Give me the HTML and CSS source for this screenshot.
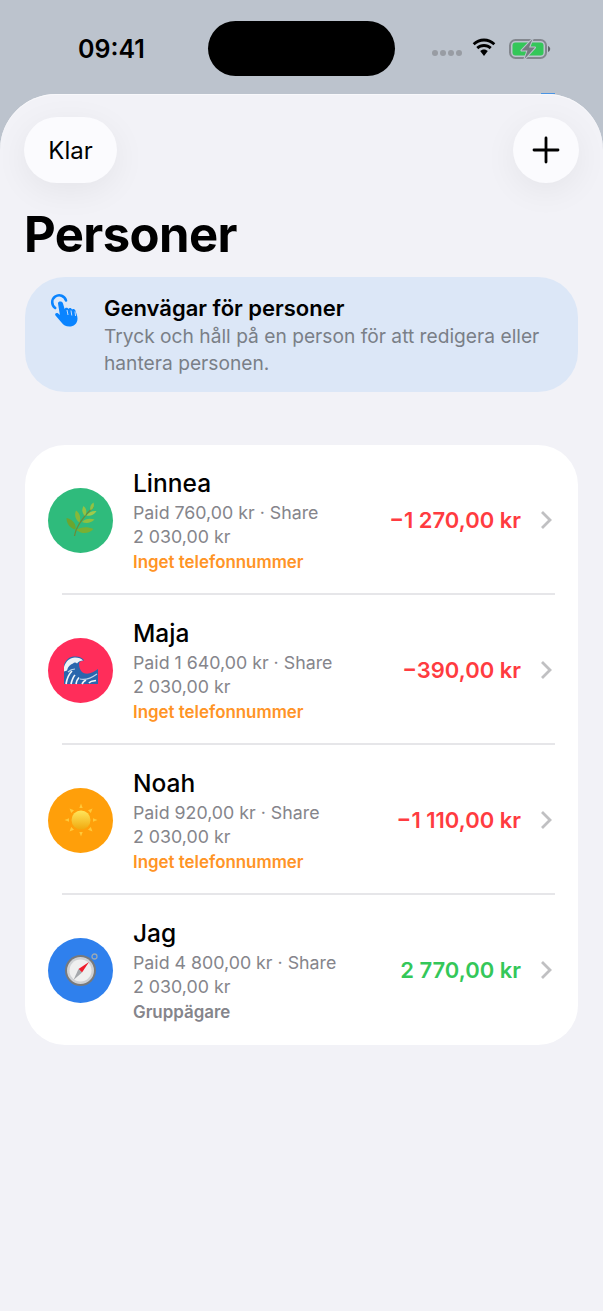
FILE: index.html
```html
<!DOCTYPE html>
<html lang="sv">
<head>
<meta charset="utf-8">
<title>Personer</title>
<link rel="stylesheet" href="styles.css">
</head>
<body>
<div class="screen">
  <header class="status">
    <div class="time">09:41</div>
    <div class="island"></div>
    <div class="status-icons">
      <div class="dots"><i></i><i></i><i></i><i></i></div>
      <svg class="wifi" viewBox="0 0 26 19" width="26" height="19"><path d="M13 3.600c3.600 0 6.900 1.400 9.400 3.700l1.900-2.100C21.300 2.300 17.300.6 13 .6S4.700 2.300 1.700 5.200l1.900 2.100C6.100 5 9.400 3.600 13 3.600z" fill="#000"/><path d="M13 9c2.200 0 4.200.8 5.700 2.200l2-2.100C18.600 7.200 15.900 6 13 6S7.400 7.200 5.300 9.100l2 2.100C8.800 9.800 10.800 9 13 9z" fill="#000"/><path d="M13 11.400c-1.500 0-2.800.6-3.800 1.500L13 18l3.800-5.100c-1-.9-2.300-1.500-3.800-1.500z" fill="#000"/></svg>
      <svg class="battery" viewBox="0 0 42 22" width="42" height="22"><rect x="1" y="2" width="36" height="18" rx="5.500" fill="none" stroke="#83878e" stroke-width="2"/><rect x="3.500" y="4.500" width="31" height="13" rx="3" fill="#34c759"/><path d="M39 8v6c1.300-.5 2.200-1.700 2.200-3S40.300 8.500 39 8z" fill="#5f6268"/><path d="M23.500 1 12.500 12.500h6L15.500 21 26 9.500h-6z" fill="#767a81" stroke="#bcc3cd" stroke-width="2" stroke-linejoin="round" paint-order="stroke"/></svg>
    </div>
  </header>
  <main class="sheet">
    <nav class="toolbar">
      <button class="pill">Klar</button>
      <button class="pill round" aria-label="Lägg till">
        <svg viewBox="0 0 28 28" width="28" height="28"><path d="M14 2v24M2 14h24" stroke="#000" stroke-width="2.800" stroke-linecap="round" fill="none"/></svg>
      </button>
    </nav>
    <h1 class="title">Personer</h1>
    <section class="tip">
      <svg class="tip-icon" viewBox="0 0 45 45" width="45" height="45">
        <path d="M10.200 18A7 7 0 1 1 21 10.500" fill="none" stroke="#0a84ff" stroke-width="2.600" stroke-linecap="round"/>
        <path d="M13 13.500c0-2.600 4.400-2.600 5 0l1.600 5.500c.6-1.800 3.200-1.800 3.800 0 .8-1.500 3.200-1.200 3.600.6.800-1 3-.6 3.400 1 .8 2.500 2.100 5.400 2.100 7.900 0 5.500-4 8-8 8s-6-1.500-8-4l-6-7c-1.200-1.600.8-3.400 2.400-2.200l2 1.700z" fill="#0a84ff"/>
        <path d="M22 20l1 5M26 20.500l.8 5M30 21.500l.6 4.500" stroke="#dce7f7" stroke-width=".9" fill="none"/>
      </svg>
      <div class="tip-text">
        <div class="tip-title">Genvägar för personer</div>
        <p class="tip-body">Tryck och håll på en person för att redigera eller hantera personen.</p>
      </div>
    </section>
    <section class="card">
      <article class="row">
        <div class="avatar green">
          <svg viewBox="0 0 36 36" width="36" height="36">
            <path d="M11.500 34C13 24 20 15 30.500 5" stroke="#6f8a34" stroke-width="1.300" fill="none"/>
            <path d="M12.500 27.500C7 26.500 3.500 21.500 3.500 16c5.500 1 10 5.500 9 11.500z" fill="#6ca52f"/>
            <path d="M13.500 28c4-3 10.500-3.800 17-1-4.500 5-12 5.500-17 1z" fill="#79b033"/>
            <path d="M16.500 20.500c-4-2.500-5.500-7.500-3.500-12 3.800 2.500 5.300 7.500 3.500 12z" fill="#86b83a"/>
            <path d="M19 20c3-3 7.500-4 12.500-2.500-3 3.500-8.500 4.500-12.500 2.500z" fill="#8fc040"/>
            <path d="M22 14c-3-2.500-3.500-6.500-1.500-10 3 2.500 4 6.500 1.500 10z" fill="#93c243"/>
            <path d="M23.500 13.500c2-3 5.500-5 10-4.500-2 3.500-6 5.500-10 4.500z" fill="#a0ca4b"/>
            <path d="M27.500 8.500c-1-3 0-6 3-8 1 3 .2 6-3 8z" fill="#93c243"/>
          </svg>
        </div>
        <div class="info">
          <div class="name">Linnea</div>
          <div class="line">Paid 760,00 kr · Share</div>
          <div class="line">2 030,00 kr</div>
          <div class="note warn">Inget telefonnummer</div>
        </div>
        <div class="amount neg">−1 270,00 kr</div>
        <svg class="chev" viewBox="0 0 12 20" width="12" height="20"><path d="M2 2l8 8-8 8" fill="none" stroke="#c0c0c2" stroke-width="2.800"/></svg>
      </article>
      <article class="row">
        <div class="avatar red">
          <svg viewBox="0 0 36 36" width="36" height="36">
            <path d="M1 32V13C3 7 7 4.500 12 4.500c4 0 8 1.500 9 4-2 0-4.500.8-5 3 0 5 2 9 6 10 5 .8 9-1.500 13-4.500V32z" fill="#2a66ad"/>
            <path d="M1 15c2-6 6-9.500 11-9.500 3.500 0 6.500 1 8 3-2 .2-5 1-6 3-1-1.500-3-1.500-4 0-3 1-5 3-6 7l-3 1z" fill="#eef3f7"/>
            <path d="M3 32c1-6 3-10 6-13M8 32c1-4 2-7 4-9M13 32c.5-3 1.500-5 3-6.500M19 32c1-2 2-3 4-4M26 31c1-1.500 3-2 7-2.500" stroke="#f2f6f9" stroke-width="1.700" fill="none"/>
            <path d="M5 20c2-2 4-3 7-3M17 27c4 1 10 0 17-5" stroke="#bdd5ea" stroke-width="1.200" fill="none"/>
          </svg>
        </div>
        <div class="info">
          <div class="name">Maja</div>
          <div class="line">Paid 1 640,00 kr · Share</div>
          <div class="line">2 030,00 kr</div>
          <div class="note warn">Inget telefonnummer</div>
        </div>
        <div class="amount neg">−390,00 kr</div>
        <svg class="chev" viewBox="0 0 12 20" width="12" height="20"><path d="M2 2l8 8-8 8" fill="none" stroke="#c0c0c2" stroke-width="2.800"/></svg>
      </article>
      <article class="row">
        <div class="avatar orange">
          <svg viewBox="0 0 36 36" width="36" height="36">
            <defs><linearGradient id="sun" x1="0" y1="0" x2="0" y2="1"><stop offset="0" stop-color="#ffe65c"/><stop offset="1" stop-color="#f0a90f"/></linearGradient></defs>
            <g fill="#ffc93a">
              <path d="M18 1.500l1.700 4.500h-3.400zM18 34.500l1.700-4.500h-3.400zM1.500 18l4.500-1.700v3.400zM34.500 18l-4.500-1.700v3.400z"/>
              <path d="M6.500 6.500l4.500 1.700-2.800 2.800zM29.500 6.500l-4.500 1.700 2.800 2.800zM6.500 29.500l4.500-1.700-2.800-2.800zM29.500 29.500l-4.500-1.700 2.800-2.800z"/>
            </g>
            <circle cx="18" cy="18" r="9.500" fill="url(#sun)"/>
          </svg>
        </div>
        <div class="info">
          <div class="name">Noah</div>
          <div class="line">Paid 920,00 kr · Share</div>
          <div class="line">2 030,00 kr</div>
          <div class="note warn">Inget telefonnummer</div>
        </div>
        <div class="amount neg">−1 110,00 kr</div>
        <svg class="chev" viewBox="0 0 12 20" width="12" height="20"><path d="M2 2l8 8-8 8" fill="none" stroke="#c0c0c2" stroke-width="2.800"/></svg>
      </article>
      <article class="row">
        <div class="avatar blue">
          <svg viewBox="0 0 36 36" width="36" height="36">
            <circle cx="31.500" cy="4.500" r="2.500" fill="none" stroke="#9aa8b5" stroke-width="1.300"/>
            <circle cx="17.500" cy="18.500" r="15.500" fill="#77797c"/>
            <circle cx="17.500" cy="18.500" r="13.500" fill="#cfd1d4"/>
            <circle cx="17.500" cy="18.500" r="11" fill="#efefef"/>
            <path d="M26 10 15.500 17 19 20.500z" fill="#ef1c2c"/>
            <path d="M10.500 28 15.500 17 19 20.500z" fill="#a5a8ac"/>
          </svg>
        </div>
        <div class="info">
          <div class="name">Jag</div>
          <div class="line">Paid 4 800,00 kr · Share</div>
          <div class="line">2 030,00 kr</div>
          <div class="note owner">Gruppägare</div>
        </div>
        <div class="amount pos">2 770,00 kr</div>
        <svg class="chev" viewBox="0 0 12 20" width="12" height="20"><path d="M2 2l8 8-8 8" fill="none" stroke="#c0c0c2" stroke-width="2.800"/></svg>
      </article>
    </section>
  </main>
</div>
</body>
</html>
```

FILE: styles.css
```css
* { box-sizing: border-box; }
html, body { margin: 0; padding: 0; }
body {
  width: 603px;
  height: 1311px;
  overflow: hidden;
  background: #bcc3cd;
  font-family: Inter, "Liberation Sans", sans-serif;
  color: #000;
}
.screen { width: 603px; height: 1311px; display: flex; flex-direction: column; }
.status {
  position: relative;
  height: 94px;
  flex: none;
  padding: 21px 0 0 78px;
  display: flex;
  align-items: flex-start;
}
.status::after {
  content: "";
  position: absolute;
  right: 48px;
  bottom: 0;
  width: 14px;
  height: 1px;
  background: #4a94e4;
}
.time {
  width: 130px;
  flex: none;
  margin-top: 11px;
  font-size: 25px;
  line-height: 34px;
  font-weight: 600;
}
.island { width: 187px; height: 55px; border-radius: 28px; background: #000; flex: none; }
.status-icons { margin-left: 37px; margin-top: 16px; display: flex; align-items: center; height: 24px; flex: none; }
.dots { display: flex; gap: 2px; margin-top: 8px; margin-right: 9px; }
.dots i { width: 6px; height: 6px; border-radius: 50%; background: #989ca3; display: block; }
.wifi { margin-right: 12px; margin-top: -3px; }
.battery { margin-top: -1px; }
.sheet {
  flex: 1;
  background: #f2f2f7;
  border-radius: 56px 56px 0 0;
  box-shadow: inset 0 1px 0 #f8f8fb;
  padding: 23px 24px 0;
}
.toolbar { display: flex; justify-content: space-between; }
.pill {
  height: 66px;
  width: 93px;
  border: 0;
  border-radius: 33px;
  background: #fbfbfe;
  box-shadow: 0 8px 34px rgba(0, 0, 0, .06);
  font: 400 24px/30px Inter, "Liberation Sans", sans-serif;
  color: #000;
  padding: 2px 0 0;
  display: flex;
  align-items: center;
  justify-content: center;
}
.round { width: 66px; padding: 0; }
.title {
  margin: 22px 0 0;
  font-size: 49px;
  line-height: 60px;
  font-weight: 700;
  letter-spacing: -.6px;
}
.tip {
  margin: 12px 0 0 1px;
  width: 553px;
  height: 115px;
  background: #dce7f7;
  border-radius: 40px;
  padding: 17px 20px 0 20px;
  display: flex;
}
.tip-icon { flex: none; margin-top: -4px; }
.tip-text { margin-left: 14px; }
.tip-title { font-size: 22px; line-height: 28px; font-weight: 600; }
.tip-body {
  margin: 1px 0 0;
  font-size: 19.200px;
  line-height: 27px;
  color: #7a7f87;
}
.card {
  margin: 53px 0 0 1px;
  width: 553px;
  background: #fff;
  border-radius: 40px;
  overflow: hidden;
}
.row {
  position: relative;
  height: 150px;
  padding: 0 26px 0 23px;
  display: flex;
  align-items: center;
}
.row + .row::before {
  content: "";
  position: absolute;
  top: -2px;
  left: 37px;
  right: 23px;
  height: 2px;
  background: #e6e6e9;
}
.avatar {
  width: 65px;
  height: 65px;
  border-radius: 50%;
  flex: none;
  display: flex;
  align-items: center;
  justify-content: center;
}
.green { background: #2fbb7c; }
.red { background: #ff2d5a; }
.orange { background: #ff9f0a; }
.blue { background: #2f80ed; }
.info { margin-left: 20px; flex: 1; min-width: 0; white-space: nowrap; padding-top: 1px; }
.name { font-size: 24.500px; line-height: 30px; font-weight: 500; margin-bottom: 3px; padding-top: 1px; }
.line { font-size: 17.800px; line-height: 24px; color: #85858b; }
.note { font-size: 16.900px; line-height: 26px; font-weight: 600; margin-top: 0; }
.warn { color: #ff9426; }
.owner { color: #85858b; }
.amount { font-size: 22px; font-weight: 600; line-height: 30px; white-space: nowrap; }
.neg { color: #ff3b40; }
.pos { color: #34c759; }
.chev { flex: none; margin-left: 19px; }
```
